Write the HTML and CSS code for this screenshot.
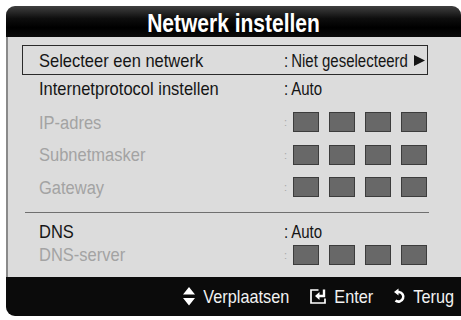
FILE: index.html
```html
<!DOCTYPE html>
<html lang="nl">
<head>
<meta charset="utf-8">
<title>Netwerk instellen</title>
<link rel="stylesheet" href="styles.css">
</head>
<body>
<div class="panel">
  <div class="header"><h1 class="title">Netwerk instellen</h1></div>
  <div class="content">
    <div class="list">
      <div class="row row-select selected">
        <span class="label">Selecteer een netwerk</span>
        <span class="value"><span class="tall"><span class="vc">:</span>Niet geselecteerd</span><svg class="tri" width="11" height="11" viewBox="0 0 11 11"><path d="M0 0 L11 5.5 L0 11 Z" fill="#151515"/></svg></span>
      </div>
      <div class="row row-text">
        <span class="label">Internetprotocol instellen</span>
        <span class="value"><span class="tall"><span class="vc">:</span>Auto</span></span>
      </div>
      <div class="row row-ip dim first-ip">
        <span class="label">IP-adres</span>
        <span class="value"><span class="colon">:</span><span class="boxes"><i></i><i></i><i></i><i></i></span></span>
      </div>
      <div class="row row-ip dim">
        <span class="label">Subnetmasker</span>
        <span class="value"><span class="colon">:</span><span class="boxes"><i></i><i></i><i></i><i></i></span></span>
      </div>
      <div class="row row-ip dim">
        <span class="label">Gateway</span>
        <span class="value"><span class="colon">:</span><span class="boxes"><i></i><i></i><i></i><i></i></span></span>
      </div>
      <div class="sep"></div>
      <div class="row row-dns">
        <span class="label">DNS</span>
        <span class="value"><span class="tall"><span class="vc">:</span>Auto</span></span>
      </div>
      <div class="row row-dns2 dim">
        <span class="label">DNS-server</span>
        <span class="value"><span class="colon">:</span><span class="boxes"><i></i><i></i><i></i><i></i></span></span>
      </div>
    </div>
  </div>
  <div class="footer">
    <span class="hint">
      <svg class="ic" width="12" height="19" viewBox="0 0 12 19"><path d="M6 0 L12 7.5 H0 Z M0 11 H12 L6 18.5 Z" fill="#fff"/></svg>
      <span class="ftext">Verplaatsen</span>
    </span>
    <span class="hint">
      <svg class="ic" width="16" height="15" viewBox="0 0 16 15"><path d="M8.5 1 H1 V14 H15 V9.5" fill="none" stroke="#fff" stroke-width="1.7"/><path d="M14 0.5 V7 H8.5" fill="none" stroke="#fff" stroke-width="2.4"/><path d="M5 7 L9.5 3 V11 Z" fill="#fff"/></svg>
      <span class="ftext">Enter</span>
    </span>
    <span class="hint">
      <svg class="ic" width="11" height="15" viewBox="0 0 11 15"><path d="M3 3 H5 A4.8 4.8 0 1 1 1.5 11.5" fill="none" stroke="#fff" stroke-width="2.6"/><path d="M0 3 L4.5 -0.5 V6.5 Z" fill="#fff"/></svg>
      <span class="ftext">Terug</span>
    </span>
  </div>
</div>
</body>
</html>
```
FILE: styles.css
```css
html, body {
  margin: 0;
  padding: 0;
  background: #ffffff;
}
body {
  font-family: "Liberation Sans", Arial, sans-serif;
  width: 461px;
  height: 320px;
  overflow: hidden;
}
.panel {
  margin: 6px 0 0 6px;
  width: 455px;
  height: 310px;
  display: flex;
  flex-direction: column;
  border-radius: 9px 9px 0 9px;
  overflow: hidden;
  background: #dcdcdc;
}
.header {
  height: 31px;
  flex: none;
  background: linear-gradient(to bottom, #404040 0%, #0e0e0e 40%, #000 70%, #0a0a0a 100%);
  display: flex;
  align-items: center;
  justify-content: center;
}
.title {
  margin: 0;
  color: #fff;
  font-size: 21px;
  font-weight: bold;
  line-height: 31px;
  padding-top: 2px;
  transform: scaleY(1.22);
}
.content {
  flex: 1;
  border-left: 2px solid #8a8a8a;
  padding: 8px 0 0 14px;
}
.list {
  width: 406px;
}
.row {
  display: flex;
  align-items: center;
  border: 1px solid transparent;
  padding: 0 0 0 16px;
  font-size: 16.5px;
  color: #151515;
}
.row .label {
  width: 245px;
  flex: none;
  white-space: nowrap;
  display: inline-block;
  transform: scaleY(1.12);
}
.row .value {
  display: flex;
  align-items: center;
  white-space: nowrap;
  font-size: 15px;
}
.tall {
  display: inline-block;
  transform: scaleY(1.2);
}
.vc {
  margin-right: 3px;
}
.row-select {
  height: 30px;
  box-sizing: border-box;
}
.selected {
  border-color: #2a2a2a;
}
.tri {
  display: block;
  margin-left: 6px;
}
.row-text {
  height: 26px;
  box-sizing: border-box;
}
.row-ip {
  height: 32.5px;
  box-sizing: border-box;
}
.first-ip {
  margin-top: 5px;
}
.dim {
  color: #a3a3a3;
}
.colon {
  font-size: 11px;
  width: 9px;
  color: #a8a8a8;
}
.boxes {
  display: flex;
  gap: 10px;
}
.boxes i {
  display: block;
  width: 26px;
  height: 20px;
  box-sizing: border-box;
  background: #686868;
  border: 1px solid #3c3c3c;
}
.sep {
  height: 1px;
  background: #6f6f6f;
  margin: 8px -1px 7px 3px;
}
.row-dns {
  height: 23px;
  box-sizing: border-box;
}
.row-dns2 {
  height: 24px;
  box-sizing: border-box;
}
.footer {
  height: 39px;
  flex: none;
  background: #0b0b0b;
  display: flex;
  align-items: center;
  justify-content: flex-end;
  gap: 21px;
  padding-right: 7px;
  color: #f2f2f2;
  font-size: 16.3px;
}
.hint {
  display: flex;
  align-items: center;
  gap: 8px;
}
.ftext {
  display: inline-block;
  transform: scaleY(1.15);
}
.ic {
  display: block;
  flex: none;
  overflow: visible;
}
```
